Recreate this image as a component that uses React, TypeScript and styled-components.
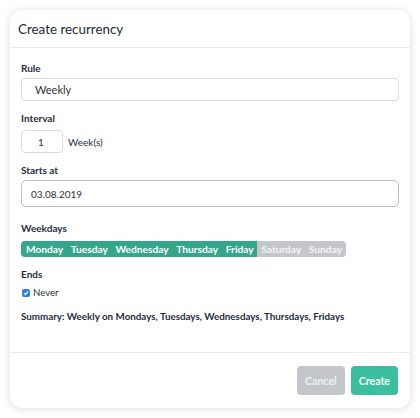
import React from 'react'
import styled, { createGlobalStyle } from 'styled-components'

const GlobalStyle = createGlobalStyle`
  html, body {
    margin: 0;
    padding: 0;
    background: #ffffff;
  }
  body {
    font-family: Lato, "Open Sans", sans-serif;
    color: #1d2b3a;
  }
`;

const Page = styled.div`
  padding: 10px;
`;

const Modal = styled.div`
  width: 400px;
  height: 398px;
  box-sizing: border-box;
  background: #fff;
  border-radius: 12px;
  box-shadow: 0 1px 8px rgba(0, 0, 0, 0.14);
  display: flex;
  flex-direction: column;
`;

const Header = styled.div`
  height: 37px;
  display: flex;
  align-items: center;
  padding: 0 8px;
  border-bottom: 1px solid #ececec;
  font-size: 13.4px;
  color: #1c2a38;
`;

const Body = styled.div`
  flex: 1;
  padding: 13px 11px 0 11px;
  border-bottom: 1px solid #ececec;
`;

const Field = styled.div<{ $gap?: number }>`
  margin-bottom: ${p => p.$gap ?? 10}px;
`;

const Label = styled.div<{ $space?: number }>`
  font-size: 10px;
  font-weight: 700;
  line-height: 14px;
  margin-bottom: ${p => p.$space ?? 3}px;
  color: #1f2d3f;
`;

const Input = styled.div<{ $strong?: boolean }>`
  box-sizing: border-box;
  height: ${p => (p.$strong ? 27 : 23)}px;
  border: 1px solid ${p => (p.$strong ? '#babec3' : '#dcdcdc')};
  border-radius: ${p => (p.$strong ? 5 : 4)}px;
  padding-left: ${p => (p.$strong ? 9 : 13)}px;
  display: flex;
  align-items: center;
  font-size: ${p => (p.$strong ? 10 : 11)}px;
  color: #333;
`;

const Row = styled.div`
  display: flex;
  align-items: center;
  gap: 5px;
  font-size: 10px;
  color: #1f2d3f;
`;

const SmallInput = styled(Input)`
  width: 42px;
  padding-left: 16px;
  font-size: 10px;
`;

const Days = styled.div`
  display: inline-flex;
  border-radius: 4px;
  overflow: hidden;
`;

const Day = styled.span<{ $on: boolean }>`
  height: 16px;
  display: flex;
  align-items: center;
  padding: 0 3.8px;
  font-size: 10.2px;
  font-weight: 700;
  color: ${p => (p.$on ? '#ffffff' : '#f4f5f6')};
  background: ${p => (p.$on ? '#33a68b' : '#c3c7cb')};
  &:first-child {
    padding-left: 5px;
  }
  &:last-child {
    padding-right: 4px;
  }
`;

const Check = styled.span`
  width: 8px;
  height: 8px;
  border-radius: 2px;
  background: #2f7fe3;
  display: inline-flex;
  align-items: center;
  justify-content: center;
  margin-left: 1px;
`;

const CheckRow = styled.div`
  display: flex;
  align-items: center;
  gap: 3px;
  font-size: 9.6px;
  color: #1f2d3f;
`;

const Summary = styled.div`
  font-size: 9.8px;
  font-weight: 700;
  color: #1f2d3f;
`;

const Footer = styled.div`
  height: 55px;
  display: flex;
  justify-content: flex-end;
  align-items: flex-start;
  gap: 6px;
  padding: 13px 12px 0 0;
  box-sizing: border-box;
`;

const Button = styled.button<{ $primary?: boolean }>`
  height: 29px;
  border: none;
  border-radius: 4px;
  padding: 0 8px;
  font-family: Lato, sans-serif;
  font-size: 10.6px;
  font-weight: 700;
  color: ${p => (p.$primary ? '#fff' : '#eef0f1')};
  background: ${p => (p.$primary ? '#3bbf9e' : '#c3c7cb')};
`;

const days = ['Monday', 'Tuesday', 'Wednesday', 'Thursday', 'Friday', 'Saturday', 'Sunday']

export default function App() {
  return (
    <Page>
      <GlobalStyle />
      <Modal>
        <Header>Create recurrency</Header>
        <Body>
          <Field>
            <Label>Rule</Label>
            <Input>Weekly</Input>
          </Field>
          <Field>
            <Label $space={5}>Interval</Label>
            <Row>
              <SmallInput>1</SmallInput>
              <span>Week(s)</span>
            </Row>
          </Field>
          <Field $gap={14}>
            <Label>Starts at</Label>
            <Input $strong>03.08.2019</Input>
          </Field>
          <Field $gap={10}>
            <Label $space={2}>Weekdays</Label>
            <Days>
              {days.map((d, i) => (
                <Day key={d} $on={i < 5}>{d}</Day>
              ))}
            </Days>
          </Field>
          <Field $gap={12}>
            <Label $space={6}>Ends</Label>
            <CheckRow>
              <Check>
                <svg width="6" height="6" viewBox="0 0 8 8">
                  <path d="M1.3 4.2 L3.3 6.2 L6.8 1.8" stroke="#fff" strokeWidth="1.6" fill="none" />
                </svg>
              </Check>
              Never
            </CheckRow>
          </Field>
          <Summary>Summary: Weekly on Mondays, Tuesdays, Wednesdays, Thursdays, Fridays</Summary>
        </Body>
        <Footer>
          <Button>Cancel</Button>
          <Button $primary>Create</Button>
        </Footer>
      </Modal>
    </Page>
  )
}
